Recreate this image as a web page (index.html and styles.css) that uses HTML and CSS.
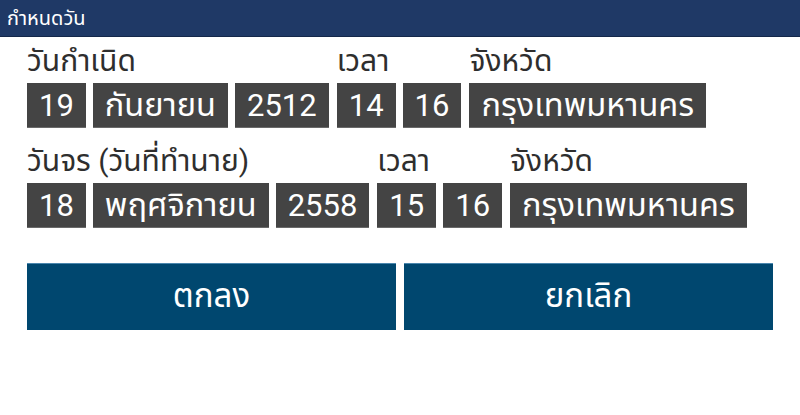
FILE: index.html
```html
<!DOCTYPE html>
<html lang="th">
<head>
<meta charset="utf-8">
<title>กำหนดวัน</title>
<link rel="stylesheet" href="styles.css">
</head>
<body>
<header class="titlebar">กำหนดวัน</header>
<main class="form">
  <div class="row">
    <div class="group">
      <div class="label">วันกำเนิด</div>
      <div class="boxes">
        <div class="box">19</div>
        <div class="box th">กันยายน</div>
        <div class="box">2512</div>
      </div>
    </div>
    <div class="group">
      <div class="label">เวลา</div>
      <div class="boxes">
        <div class="box">14</div>
        <div class="box">16</div>
      </div>
    </div>
    <div class="group">
      <div class="label">จังหวัด</div>
      <div class="boxes">
        <div class="box th">กรุงเทพมหานคร</div>
      </div>
    </div>
  </div>
  <div class="row row2">
    <div class="group">
      <div class="label">วันจร (วันที่ทำนาย)</div>
      <div class="boxes">
        <div class="box">18</div>
        <div class="box th">พฤศจิกายน</div>
        <div class="box">2558</div>
      </div>
    </div>
    <div class="group">
      <div class="label">เวลา</div>
      <div class="boxes">
        <div class="box">15</div>
        <div class="box">16</div>
      </div>
    </div>
    <div class="group">
      <div class="label">จังหวัด</div>
      <div class="boxes">
        <div class="box th">กรุงเทพมหานคร</div>
      </div>
    </div>
  </div>
  <div class="actions">
    <button class="btn">ตกลง</button>
    <button class="btn">ยกเลิก</button>
  </div>
</main>
</body>
</html>
```
FILE: styles.css
```css
html, body {
  margin: 0;
  padding: 0;
  background: #ffffff;
  font-family: Roboto, "Noto Sans Thai", "Noto Sans", "DejaVu Sans", sans-serif;
}
.titlebar {
  height: 36px;
  line-height: 36px;
  background: #1f3966;
  border-bottom: 1px solid #14284a;
  color: #ffffff;
  font-size: 20px;
  padding-left: 7px;
}
.form {
  padding: 12px 27px 0 27px;
}
.row {
  display: flex;
  gap: 8px;
}
.row2 {
  margin-top: 21px;
}
.group {
  display: flex;
  flex-direction: column;
}
.label {
  font-size: 30px;
  line-height: 24px;
  height: 24px;
  margin-bottom: 10px;
  color: #2e2e2e;
  white-space: nowrap;
}
.boxes {
  display: flex;
  gap: 7px;
}
.box {
  height: 45px;
  line-height: 45px;
  background: #444444;
  color: #ffffff;
  font-size: 31px;
  padding: 0 12px;
  box-sizing: border-box;
  white-space: nowrap;
  border-bottom: 1px solid #6a6a6a;
}
.box.th {
  font-size: 32.5px;
}
.actions {
  display: flex;
  gap: 8px;
  margin-top: 35px;
}
.btn {
  flex: 1;
  height: 67px;
  border: 0;
  border-top: 1px solid #4a86ad;
  background: #00476f;
  color: #ffffff;
  font-family: inherit;
  font-size: 33px;
  padding: 0;
}
```
